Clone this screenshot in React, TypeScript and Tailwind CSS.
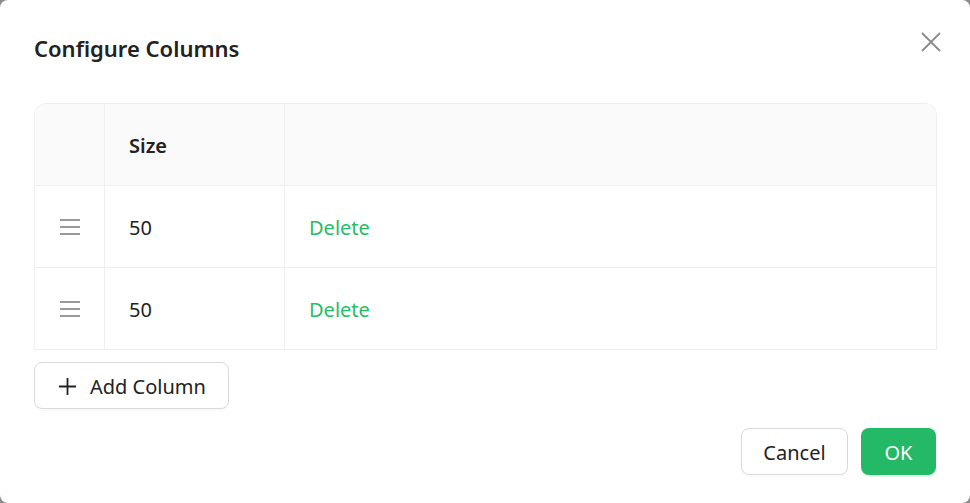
const rows = [{ id: 1, size: 50 }, { id: 2, size: 50 }];

function DragHandle() {
    return (
        <svg width="20" height="16" viewBox="0 0 20 16" fill="none" stroke="#9a9a9a" strokeWidth="2">
            <path d="M0 1h20M0 8h20M0 15h20" />
        </svg>
    );
}

function CloseIcon() {
    return (
        <svg width="20" height="20" viewBox="0 0 20 20" fill="none" stroke="#8a8a8a" strokeWidth="1.8">
            <path d="M1 1l18 18M19 1L1 19" />
        </svg>
    );
}

function PlusIcon() {
    return (
        <svg width="17" height="17" viewBox="0 0 17 17" fill="none" stroke="#222" strokeWidth="1.8">
            <path d="M8.5 0v17M0 8.5h17" />
        </svg>
    );
}

export default function App() {
    return (
        <div className="h-screen w-full bg-[#8c8c8c] font-['Noto_Sans','Open_Sans',sans-serif] text-[#222]">
            <div className="relative flex h-full flex-col rounded-lg bg-white pt-[33px] pr-[33px] pl-[34px]">
                <h2 className="text-[22px] leading-[30px] font-semibold">Configure Columns</h2>
                <button className="absolute top-[32px] right-[29px]">
                    <CloseIcon />
                </button>

                {/* Table */}
                <div className="mt-[40px] overflow-hidden rounded-t-xl border border-[#efefef] text-[20px]">
                    <div className="grid h-[81px] grid-cols-[70px_180px_1fr] bg-[#fafafa]">
                        <div className="border-r border-[#efefef]" />
                        <div className="flex items-center border-r border-[#efefef] px-6 pt-[2px] font-semibold">Size</div>
                        <div />
                    </div>
                    {rows.map((row) => (
                        <div key={row.id} className="grid h-[82px] grid-cols-[70px_180px_1fr] border-t border-[#efefef]">
                            <div className="flex items-center justify-center border-r border-[#efefef]">
                                <DragHandle />
                            </div>
                            <div className="flex items-center border-r border-[#efefef] px-6 pt-[2px]">{row.size}</div>
                            <div className="flex items-center px-6 pt-[2px] text-[#27bd66]">Delete</div>
                        </div>
                    ))}
                </div>

                <div className="mt-3">
                    <button className="flex h-[47px] w-[195px] items-center gap-[14px] rounded-lg border border-[#d9d9d9] bg-white pt-[2px] pl-6 text-[20px] shadow-[0_2px_0_rgba(0,0,0,0.02)]">
                        <PlusIcon />
                        <span>Add Column</span>
                    </button>
                </div>

                <div className="mt-[19px] flex justify-end gap-[13px] pr-[1px] text-[20px]">
                    <button className="h-[47px] w-[107px] rounded-lg border border-[#d9d9d9] bg-white pt-[2px] shadow-[0_2px_0_rgba(0,0,0,0.02)]">
                        Cancel
                    </button>
                    <button className="h-[47px] w-[75px] rounded-lg bg-[#24b966] pt-[2px] text-white shadow-[0_2px_0_rgba(5,145,60,0.1)]">
                        OK
                    </button>
                </div>
            </div>
        </div>
    );
}
